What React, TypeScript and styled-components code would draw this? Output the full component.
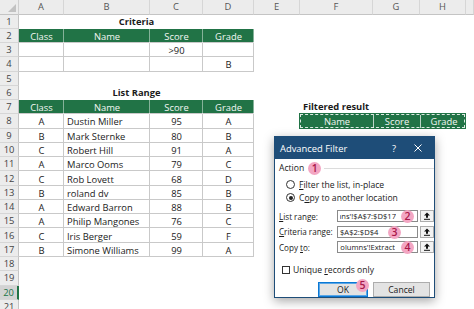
import React from "react";
import styled, { createGlobalStyle, css } from "styled-components";

const GlobalStyle = createGlobalStyle`
  html, body { margin: 0; padding: 0; background: #fff; }
  body {
    width: 474px;
    height: 309px;
    overflow: hidden;
    font-family: "Open Sans", "Liberation Sans", sans-serif;
  }
`;

const GREEN = "#217346";
const NAVY = "#1e4d78";

const Screen = styled.div`
  position: relative;
  width: 474px;
  height: 309px;
  overflow: hidden;
  background: #fff;
`;

const Sheet = styled.div`
  display: grid;
  grid-template-columns: 19px 45px 86px 53px 51px 46px 73px 47px 46px 1fr;
  grid-template-rows: 14.5px repeat(21, 14.27px);
  font-size: 9.4px;
  color: #1b1b1b;
`;

const Corner = styled.div`
  position: relative;
  background: #ececec;
  border-right: 1px solid #cfcfcf;
  border-bottom: 1px solid #c4c4c4;
  &::after {
    content: "";
    position: absolute;
    right: 2px;
    bottom: 2px;
    border-left: 8px solid transparent;
    border-bottom: 8px solid #c2c2c2;
  }
`;

const ColHead = styled.div`
  display: flex;
  align-items: center;
  justify-content: center;
  background: #ececec;
  color: #555;
  border-right: 1px solid #d6d6d6;
  border-bottom: 1px solid #c4c4c4;
`;

const RowHead = styled.div<{ $active?: boolean }>`
  display: flex;
  align-items: center;
  justify-content: center;
  background: ${(p) => (p.$active ? "#d3d3d3" : "#ececec")};
  color: ${(p) => (p.$active ? GREEN : "#444")};
  border-bottom: 1px solid #d6d6d6;
  border-right: ${(p) => (p.$active ? `2px solid ${GREEN}` : "1px solid #c4c4c4")};
  box-sizing: border-box;
  overflow: hidden;
`;

type Kind = "plain" | "box" | "head" | "title" | "note";

const Cell = styled.div<{ $kind?: Kind; $left?: boolean; $span?: number }>`
  display: flex;
  align-items: center;
  justify-content: ${(p) => (p.$left ? "flex-start" : "center")};
  padding: 1px 3px 0;
  white-space: nowrap;
  min-width: 0;
  grid-column: span ${(p) => p.$span ?? 1};
  ${(p) =>
    p.$kind === "box" &&
    css`
      box-shadow: inset -1px -1px 0 #c9c9c9;
    `}
  ${(p) =>
    p.$kind === "head" &&
    css`
      background: ${GREEN};
      color: #f2f7f3;
      box-shadow: inset -1px 0 0 rgba(255, 255, 255, 0.45), inset 0 -1px 0 #c9c9c9;
    `}
  ${(p) =>
    p.$kind === "title" &&
    css`
      font-weight: 700;
      align-items: flex-end;
      padding-bottom: 1px;
    `}
  ${(p) =>
    p.$kind === "note" &&
    css`
      font-weight: 700;
      overflow: visible;
      align-items: flex-end;
      padding-bottom: 1px;
    `}
`;

const ResultRange = styled.div`
  grid-column: span 3;
  display: grid;
  grid-template-columns: 73px 47px 46px;
  margin: 0 1px 1px 0;
  background: ${GREEN};
  border: 1.5px dashed rgba(255, 255, 255, 0.85);
  outline: 1px solid ${GREEN};
  color: #f2f7f3;
`;

const RangeCell = styled.div`
  display: flex;
  align-items: center;
  justify-content: center;
  &:not(:last-child) {
    border-right: 1px solid rgba(255, 255, 255, 0.7);
  }
`;

/* dialog */

const Dialog = styled.div`
  position: absolute;
  left: 274px;
  top: 136px;
  width: 161px;
  height: 162px;
  box-sizing: border-box;
  border: 1px solid ${NAVY};
  background: #fff;
  box-shadow: 0 3px 10px rgba(0, 0, 0, 0.35);
  display: flex;
  flex-direction: column;
  font-size: 8.6px;
  color: #1a1a1a;
  z-index: 5;
`;

const TitleBar = styled.div`
  height: 22px;
  flex: none;
  display: flex;
  align-items: center;
  padding-left: 5px;
  padding-right: 4px;
  background: ${NAVY};
  color: #fff;
  font-size: 9.4px;
`;

const TitleText = styled.span`
  flex: 1;
`;

const TitleButton = styled.span`
  width: 24px;
  display: flex;
  justify-content: center;
  align-items: center;
  &:first-of-type {
    margin-right: 8px;
  }
`;

const Body = styled.div`
  display: flex;
  flex-direction: column;
  padding: 0 0 0 4px;
`;

const ActionRow = styled.div`
  display: flex;
  align-items: center;
  height: 12px;
  margin-top: 3px;
`;

const GroupLine = styled.div`
  flex: 1;
  height: 1px;
  background: #dcdcdc;
  margin-left: 3px;
`;

const Badge = styled.span`
  display: inline-flex;
  align-items: center;
  justify-content: center;
  width: 13px;
  height: 13px;
  border-radius: 50%;
  background: #f3a6c3;
  color: #a8174a;
  font-size: 10.5px;
  font-weight: 600;
  line-height: 1;
  flex: none;
`;

const InlineBadge = styled(Badge)`
  margin-left: 4px;
`;

const FloatBadge = styled(Badge)<{ $x: number; $y: number }>`
  position: absolute;
  left: ${(p) => p.$x}px;
  top: ${(p) => p.$y}px;
`;

const RadioRow = styled.label<{ $first?: boolean }>`
  display: flex;
  align-items: center;
  gap: 4px;
  height: 13px;
  padding-left: 7px;
  margin-top: ${(p) => (p.$first ? "4px" : "0")};
`;

const Radio = styled.span<{ $on?: boolean }>`
  position: relative;
  width: 7px;
  height: 7px;
  border: 1px solid #333;
  border-radius: 50%;
  flex: none;
  ${(p) =>
    p.$on &&
    css`
      &::after {
        content: "";
        position: absolute;
        left: 1.5px;
        top: 1.5px;
        width: 4px;
        height: 4px;
        border-radius: 50%;
        background: #222;
      }
    `}
`;

const Key = styled.span`
  text-decoration: underline;
`;

const Fields = styled.div`
  display: flex;
  flex-direction: column;
  gap: 3.6px;
  margin-top: 6px;
`;

const FieldRow = styled.div`
  display: grid;
  grid-template-columns: 56px 81px 14px;
  column-gap: 2px;
  height: 12px;
  align-items: center;
  white-space: nowrap;
`;

const FieldLabel = styled.span`
  font-size: 8.1px;
  overflow: hidden;
`;

const InputBox = styled.div`
  position: relative;
  height: 12px;
  box-sizing: border-box;
  border: 1px solid #8a8a8a;
  display: flex;
  align-items: center;
  padding-left: 2px;
  font-size: 7.6px;
`;

const Clip = styled.span<{ $w: number }>`
  display: flex;
  justify-content: flex-end;
  overflow: hidden;
  width: ${(p) => p.$w}px;
  white-space: nowrap;
`;

const PickButton = styled.div`
  height: 12px;
  box-sizing: border-box;
  border: 1px solid #adadad;
  background: #f3f3f3;
  display: flex;
  align-items: center;
  justify-content: center;
`;

const CheckRow = styled.label`
  display: flex;
  align-items: center;
  gap: 3px;
  height: 12px;
  margin-top: 11px;
  padding-left: 3px;
`;

const Check = styled.span`
  width: 6px;
  height: 6px;
  border: 1px solid #333;
  flex: none;
`;

const Buttons = styled.div`
  display: flex;
  justify-content: flex-end;
  gap: 5px;
  margin-top: 6px;
  padding-right: 4px;
`;

const DlgButton = styled.div<{ $primary?: boolean; $w: number }>`
  position: relative;
  width: ${(p) => p.$w}px;
  height: 15px;
  box-sizing: border-box;
  display: flex;
  align-items: center;
  justify-content: center;
  background: #e3e3e3;
  border: 1px solid ${(p) => (p.$primary ? "#0a78d4" : "#adadad")};
  ${(p) =>
    p.$primary &&
    css`
      box-shadow: inset 0 0 0 1px #5aa6e6;
    `}
`;

const PickIcon = () => (
  <svg width="8" height="8" viewBox="0 0 8 8">
    <path d="M4 0.5 L7 3.6 H5 V5.8 H3 V3.6 H1 Z" fill="#111" />
    <rect x="1" y="6.8" width="6" height="1" fill="#111" />
  </svg>
);

const CloseIcon = () => (
  <svg width="8" height="8" viewBox="0 0 8 8">
    <path d="M0.5 0.5 L7.5 7.5 M7.5 0.5 L0.5 7.5" stroke="#fff" strokeWidth="1" />
  </svg>
);

const data = [
  ["A", "Dustin Miller", "95", "A"],
  ["B", "Mark Sternke", "80", "B"],
  ["C", "Robert Hill", "91", "A"],
  ["A", "Marco Ooms", "79", "C"],
  ["C", "Rob Lovett", "68", "D"],
  ["B", "roland dv", "85", "B"],
  ["A", "Edward Barron", "88", "B"],
  ["A", "Philip Mangones", "76", "C"],
  ["C", "Iris Berger", "59", "F"],
  ["B", "Simone Williams", "99", "A"],
];

const headers = ["Class", "Name", "Score", "Grade"];
const letters = ["A", "B", "C", "D", "E", "F", "G", "H", ""];

const Blanks = ({ n }: { n: number }) => (
  <>
    {Array.from({ length: n }, (_, i) => (
      <Cell key={i} />
    ))}
  </>
);

export default function App() {
  return (
    <Screen>
      <GlobalStyle />
      <Sheet>
        <Corner />
        {letters.map((l, i) => (
          <ColHead key={i}>{l}</ColHead>
        ))}

        <RowHead>1</RowHead>
        <Cell $kind="title" $span={4}>Criteria</Cell>
        <Blanks n={5} />

        <RowHead>2</RowHead>
        {headers.map((h) => (
          <Cell key={h} $kind="head">{h}</Cell>
        ))}
        <Blanks n={5} />

        <RowHead>3</RowHead>
        <Cell $kind="box" />
        <Cell $kind="box" />
        <Cell $kind="box">&gt;90</Cell>
        <Cell $kind="box" />
        <Blanks n={5} />

        <RowHead>4</RowHead>
        <Cell $kind="box" />
        <Cell $kind="box" />
        <Cell $kind="box" />
        <Cell $kind="box">B</Cell>
        <Blanks n={5} />

        <RowHead>5</RowHead>
        <Blanks n={9} />

        <RowHead>6</RowHead>
        <Cell $kind="title" $span={4}>List Range</Cell>
        <Blanks n={5} />

        <RowHead>7</RowHead>
        {headers.map((h) => (
          <Cell key={h} $kind="head">{h}</Cell>
        ))}
        <Cell />
        <Cell $kind="note" $left>Filtered result</Cell>
        <Blanks n={3} />

        {data.map((r, i) => (
          <React.Fragment key={i}>
            <RowHead>{i + 8}</RowHead>
            <Cell $kind="box">{r[0]}</Cell>
            <Cell $kind="box" $left>{r[1]}</Cell>
            <Cell $kind="box">{r[2]}</Cell>
            <Cell $kind="box">{r[3]}</Cell>
            <Cell />
            {i === 0 ? (
              <>
                <ResultRange>
                  <RangeCell>Name</RangeCell>
                  <RangeCell>Score</RangeCell>
                  <RangeCell>Grade</RangeCell>
                </ResultRange>
                <Cell />
              </>
            ) : (
              <Blanks n={4} />
            )}
          </React.Fragment>
        ))}

        {[18, 19, 20, 21].map((n) => (
          <React.Fragment key={n}>
            <RowHead $active={n === 20}>{n}</RowHead>
            <Blanks n={9} />
          </React.Fragment>
        ))}
      </Sheet>

      <Dialog>
        <TitleBar>
          <TitleText>Advanced Filter</TitleText>
          <TitleButton>?</TitleButton>
          <TitleButton>
            <CloseIcon />
          </TitleButton>
        </TitleBar>
        <Body>
          <ActionRow>
            Action
            <InlineBadge>1</InlineBadge>
            <GroupLine />
          </ActionRow>
          <RadioRow $first>
            <Radio />
            <span>
              <Key>F</Key>ilter the list, in-place
            </span>
          </RadioRow>
          <RadioRow>
            <Radio $on />
            <span>
              C<Key>o</Key>py to another location
            </span>
          </RadioRow>

          <Fields>
            <FieldRow>
              <FieldLabel>
                <Key>L</Key>ist range:
              </FieldLabel>
              <InputBox>
                <Clip $w={56}>'Columns'!$A$7:$D$17</Clip>
                <FloatBadge $x={63} $y={-1.5}>2</FloatBadge>
              </InputBox>
              <PickButton>
                <PickIcon />
              </PickButton>
            </FieldRow>
            <FieldRow>
              <FieldLabel>
                <Key>C</Key>riteria range:
              </FieldLabel>
              <InputBox>
                <span>$A$2:$D$4</span>
                <FloatBadge $x={50} $y={-1}>3</FloatBadge>
              </InputBox>
              <PickButton>
                <PickIcon />
              </PickButton>
            </FieldRow>
            <FieldRow>
              <FieldLabel>
                Copy <Key>t</Key>o:
              </FieldLabel>
              <InputBox>
                <Clip $w={55}>'Columns'!Extract</Clip>
                <FloatBadge $x={63} $y={-1.5}>4</FloatBadge>
              </InputBox>
              <PickButton>
                <PickIcon />
              </PickButton>
            </FieldRow>
          </Fields>

          <CheckRow>
            <Check />
            <span>
              Unique <Key>r</Key>ecords only
            </span>
          </CheckRow>

          <Buttons>
            <DlgButton $primary $w={50}>
              OK
              <FloatBadge $x={37} $y={-4}>5</FloatBadge>
            </DlgButton>
            <DlgButton $w={57}>Cancel</DlgButton>
          </Buttons>
        </Body>
      </Dialog>
    </Screen>
  );
}
